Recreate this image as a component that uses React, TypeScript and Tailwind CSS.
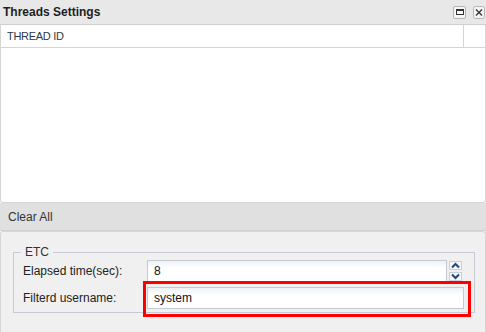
import React from "react";

const font = { fontFamily: '"Liberation Sans", Arial, sans-serif' };

function Spinner() {
  return (
    <div className="flex h-[22px] w-[16px] flex-col items-center justify-between py-[1px]">
      <svg width="13" height="9" viewBox="0 0 13 9">
        <rect x="0.5" y="0.5" width="12" height="8" fill="#f4f6fa" stroke="#c9cfdb" />
        <path d="M3 6.5 L6.5 3 L10 6.5" fill="none" stroke="#23467f" strokeWidth="2" />
      </svg>
      <svg width="13" height="9" viewBox="0 0 13 9">
        <rect x="0.5" y="0.5" width="12" height="8" fill="#f4f6fa" stroke="#c9cfdb" />
        <path d="M3 2.5 L6.5 6 L10 2.5" fill="none" stroke="#23467f" strokeWidth="2" />
      </svg>
    </div>
  );
}

export default function App() {
  return (
    <div className="flex h-[332px] w-[486px] flex-col overflow-hidden bg-white text-[#222]" style={font}>
      {/* title bar */}
      <div className="flex h-[25px] shrink-0 items-center justify-between border-b border-[#cfcfcf] bg-[#e8e8e8] pl-[3px]">
        <span className="text-[12px] font-bold text-[#1e1e1e]">Threads Settings</span>
        <div className="flex items-center gap-[7px] pr-[1px]">
          <span className="flex h-[13px] w-[13px] items-center justify-center rounded-[2px] border border-[#b4b4b4] bg-[#f6f6f6]">
            <span className="h-[6px] w-[8px] border border-t-2 border-[#333]" />
          </span>
          <svg width="12" height="13" viewBox="0 0 12 13">
            <rect x="0.5" y="0.5" width="11" height="12" rx="2" fill="#f3f3f3" stroke="#b4b4b4" />
            <path d="M3 3.5 L9 9.5 M9 3.5 L3 9.5" stroke="#333" strokeWidth="1.3" />
          </svg>
        </div>
      </div>

      {/* grid */}
      <div className="flex h-[178px] shrink-0 flex-col rounded-b-[3px] border-x border-b border-[#d6d6d6] bg-white">
        <div className="flex h-[23px] shrink-0 border-b border-[#d4d4d4]">
          <div className="flex w-[463px] items-center border-r border-[#d4d4d4] pl-[6px] text-[11px] tracking-[-0.3px] text-[#2b3a4a]">
            THREAD ID
          </div>
          <div className="flex-1" />
        </div>
        <div className="flex-1" />
      </div>

      {/* toolbar */}
      <div className="flex h-[28px] shrink-0 items-center border-b border-[#d2d2d2] bg-[#e0e0e0] pl-[8px] text-[12px] text-[#333]">
        Clear All
      </div>

      {/* panel */}
      <div className="flex-1 rounded-t-[3px] border-x border-t border-[#d6d6d6] bg-[#f0f0f0] pl-[12px] pr-[10px] pt-[12px]">
        <fieldset className="h-[69px] w-[462px] border border-[#c6cad4] px-[9px] pb-[4px] pt-0">
          <legend className="-ml-[2px] px-[4px] text-[12px] leading-[16px] text-[#333]">ETC</legend>
          <div className="flex flex-col gap-[5px]">
            <div className="flex h-[22px] items-center">
              <span className="w-[124px] text-[12px] text-[#222]">Elapsed time(sec):</span>
              <div className="flex items-center">
                <div className="flex h-[22px] w-[300px] items-center border border-[#c4c9d4] bg-gradient-to-b from-[#eef1f5] to-white to-[35%] pl-[6px] text-[12px] text-[#111]">
                  8
                </div>
                <Spinner />
              </div>
            </div>
            <div className="flex h-[22px] items-center">
              <span className="w-[124px] text-[12px] text-[#222]">Filterd username:</span>
              <div className="relative">
                <div className="flex h-[22px] w-[317px] items-center border border-[#c4c9d4] bg-gradient-to-b from-[#eef1f5] to-white to-[35%] pl-[6px] text-[12px] text-[#111]">
                  system
                </div>
                <div className="pointer-events-none absolute -bottom-[8px] -left-[4px] -right-[7px] -top-[6px] border-[3px] border-[#ff0000]" />
              </div>
            </div>
          </div>
        </fieldset>
      </div>
    </div>
  );
}
